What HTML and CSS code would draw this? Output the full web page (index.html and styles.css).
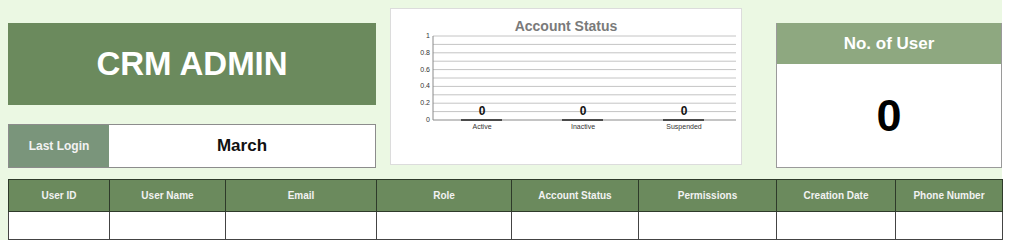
FILE: index.html
```html
<!DOCTYPE html>
<html lang="en">
  <head>
    <meta charset="UTF-8" />
    <title>CRM Admin</title>
    <link rel="stylesheet" href="styles.css">
  </head>
  <body>
    <div class="sheet">
      <div class="top">
        <div class="left">
          <div class="brand">CRM ADMIN</div>
          <div class="login">
            <div class="login-label">Last Login</div>
            <div class="login-value">March</div>
          </div>
        </div>

        <div class="chart">
          <svg width="352" height="157" viewBox="0 0 352 157">
            <text x="176" y="23" class="chart-title" text-anchor="middle">Account Status</text>
            <g class="grid">
              <line x1="43" y1="28" x2="346" y2="28" />
              <line x1="43" y1="36.4" x2="346" y2="36.4" />
              <line x1="43" y1="44.8" x2="346" y2="44.8" />
              <line x1="43" y1="53.2" x2="346" y2="53.2" />
              <line x1="43" y1="61.6" x2="346" y2="61.6" />
              <line x1="43" y1="70" x2="346" y2="70" />
              <line x1="43" y1="78.4" x2="346" y2="78.4" />
              <line x1="43" y1="86.8" x2="346" y2="86.8" />
              <line x1="43" y1="95.2" x2="346" y2="95.2" />
              <line x1="43" y1="103.6" x2="346" y2="103.6" />
            </g>
            <line class="axis" x1="43" y1="112" x2="346" y2="112" />
            <line class="axis" x1="43" y1="28" x2="43" y2="112" />
            <g class="ylabels" text-anchor="end">
              <text x="40" y="30">1</text>
              <text x="40" y="46.8">0.8</text>
              <text x="40" y="63.6">0.6</text>
              <text x="40" y="80.4">0.4</text>
              <text x="40" y="97.2">0.2</text>
              <text x="40" y="114">0</text>
            </g>
            <g class="bars">
              <line x1="71" y1="112" x2="112" y2="112" />
              <line x1="172" y1="112" x2="213" y2="112" />
              <line x1="273" y1="112" x2="314" y2="112" />
            </g>
            <g class="values" text-anchor="middle">
              <text x="92" y="107">0</text>
              <text x="193" y="107">0</text>
              <text x="294" y="107">0</text>
            </g>
            <g class="xlabels" text-anchor="middle">
              <text x="92" y="121">Active</text>
              <text x="193" y="121">Inactive</text>
              <text x="294" y="121">Suspended</text>
            </g>
          </svg>
        </div>

        <div class="users">
          <div class="users-head">No. of User</div>
          <div class="users-count">0</div>
        </div>
      </div>

      <table class="users-table">
        <colgroup>
          <col class="c1" /><col class="c2" /><col class="c3" /><col class="c4" />
          <col class="c5" /><col class="c6" /><col class="c7" /><col class="c8" />
        </colgroup>
        <thead>
          <tr>
            <th>User ID</th>
            <th>User Name</th>
            <th>Email</th>
            <th>Role</th>
            <th>Account Status</th>
            <th>Permissions</th>
            <th>Creation Date</th>
            <th>Phone Number</th>
          </tr>
        </thead>
        <tbody>
          <tr>
            <td></td><td></td><td></td><td></td><td></td><td></td><td></td><td></td>
          </tr>
        </tbody>
      </table>
    </div>
  </body>
</html>
```

FILE: styles.css
```css
body {
  margin: 0;
  background: #ffffff;
  font-family: "Liberation Sans", Arial, sans-serif;
}
.sheet {
  width: 994px;
  padding-left: 8px;
  background: #ebf8e3;
}
.top {
  display: flex;
  align-items: flex-start;
  padding-top: 8px;
  height: 160px;
}
.left {
  width: 368px;
  margin-top: 15px;
}
.brand {
  height: 82px;
  background: #6b8a5d;
  color: #ffffff;
  font-weight: bold;
  font-size: 33px;
  display: flex;
  align-items: center;
  justify-content: center;
}
.login {
  margin-top: 19px;
  height: 42px;
  display: flex;
  border: 1px solid #8c8c8c;
}
.login-label {
  width: 100px;
  background: #7a957b;
  color: #f2f2f2;
  font-weight: bold;
  font-size: 12px;
  display: flex;
  align-items: center;
  justify-content: center;
}
.login-value {
  flex: 1;
  background: #ffffff;
  color: #111;
  font-weight: bold;
  font-size: 17px;
  display: flex;
  align-items: center;
  justify-content: center;
}
.chart {
  width: 350px;
  height: 155px;
  margin-left: 14px;
  background: #ffffff;
  border: 1px solid #dcdcdc;
}
.chart svg {
  display: block;
  margin: -1px;
}
.chart-title {
  font-size: 14px;
  font-weight: bold;
  fill: #7a7a7a;
}
.grid line {
  stroke: #c4c4c4;
  stroke-width: 1;
}
.axis {
  stroke: #8a8a8a;
  stroke-width: 1;
}
.ylabels text,
.xlabels text {
  font-size: 7px;
  fill: #333;
}
.bars line {
  stroke: #222;
  stroke-width: 1.5;
}
.values text {
  font-size: 12px;
  font-weight: bold;
  fill: #111;
}
.users {
  width: 224px;
  margin-left: 34px;
  margin-top: 15px;
  border: 1px solid #9a9a9a;
  border-top: none;
}
.users-head {
  height: 41px;
  background: #8ea880;
  color: #ffffff;
  font-weight: bold;
  font-size: 17px;
  display: flex;
  align-items: center;
  justify-content: center;
}
.users-count {
  height: 103px;
  background: #ffffff;
  color: #000;
  font-weight: bold;
  font-size: 45px;
  display: flex;
  align-items: center;
  justify-content: center;
}
.users-table {
  margin-top: 11px;
  width: 994px;
  border-collapse: collapse;
  table-layout: fixed;
  background: #ffffff;
}
.users-table th {
  height: 31px;
  background: #6b8a5d;
  color: #f2f2f2;
  font-size: 10px;
  font-weight: bold;
  border: 1px solid #2e3a2a;
  padding: 0;
}
.users-table td {
  height: 27px;
  border: 1px solid #444;
  padding: 0;
}
.c1 { width: 101px; }
.c2 { width: 116px; }
.c3 { width: 151px; }
.c4 { width: 135px; }
.c5 { width: 127px; }
.c6 { width: 138px; }
.c7 { width: 119px; }
.c8 { width: 107px; }
```
